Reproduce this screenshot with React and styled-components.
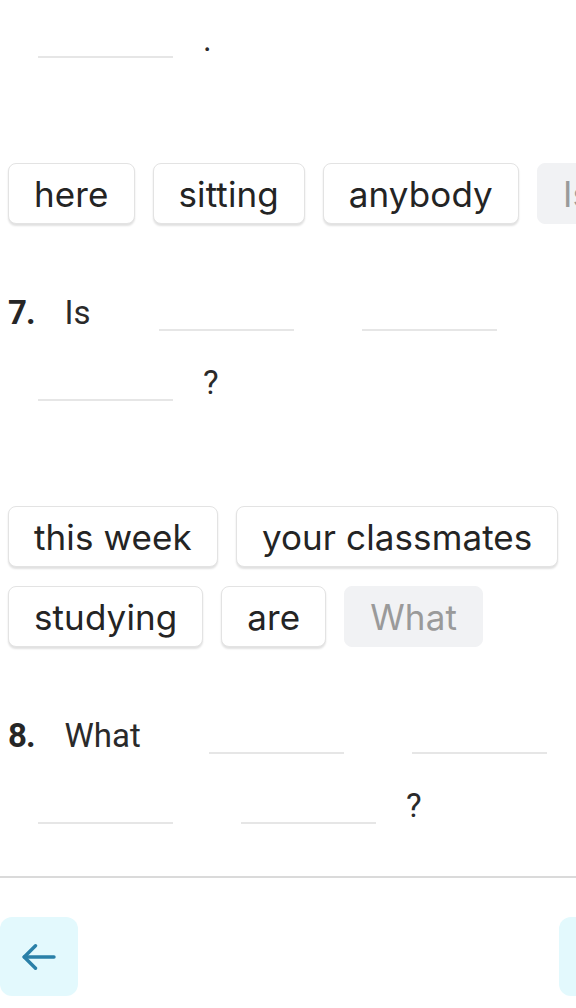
import React from "react";
import styled, { createGlobalStyle } from "styled-components";

const GlobalStyle = createGlobalStyle`
  html, body {
    margin: 0;
    padding: 0;
    background: #ffffff;
    overflow: hidden;
  }
  body {
    font-family: Roboto, "Liberation Sans", sans-serif;
    color: #2a2a2a;
  }
`;

const Page = styled.div`
  width: 637px;
  padding-top: 22px;
`;

const Content = styled.div`
  padding-left: 8px;
`;

const FillRow = styled.div`
  display: flex;
  flex-wrap: wrap;
  align-items: flex-end;
  column-gap: 8px;
  row-gap: 34px;
`;

const QNum = styled.span`
  font-family: Roboto, "Liberation Sans", sans-serif;
  font-weight: 700;
  font-size: 33px;
  line-height: 36px;
  height: 36px;
  padding-right: 22px;
  color: #262626;
  letter-spacing: -1px;
`;

const Word = styled.span`
  font-family: Roboto, "Liberation Sans", sans-serif;
  font-size: 33px;
  line-height: 36px;
  height: 36px;
  padding-right: 30px;
  color: #2a2a2a;
`;

const Punct = styled.span`
  font-family: Roboto, "Liberation Sans", sans-serif;
  font-size: 33px;
  line-height: 36px;
  height: 36px;
  margin-left: -8px;
  color: #2a2a2a;
`;

const Blank = styled.span`
  display: block;
  box-sizing: border-box;
  width: 135px;
  height: 36px;
  margin: 0 30px;
  border-bottom: 2px solid #e6e6e6;
`;

const ChipArea = styled.div`
  display: flex;
  flex-wrap: wrap;
  gap: 19px 18px;
  margin: 105px 0 71px;
`;

const Chip = styled.div`
  box-sizing: border-box;
  display: inline-flex;
  align-items: center;
  height: 61px;
  padding: 0 25px;
  border-radius: 8px;
  font-family: Inter, "Open Sans", sans-serif;
  font-size: 35px;
  letter-spacing: 0.1px;
  white-space: nowrap;
  color: ${(p) => (p.$used ? "#9a9a9a" : "#242424")};
  background: ${(p) => (p.$used ? "#f1f2f4" : "#ffffff")};
  border: 1px solid ${(p) => (p.$used ? "#f1f2f4" : "#e3e3e3")};
  box-shadow: ${(p) => (p.$used ? "none" : "0 2px 2px rgba(0, 0, 0, 0.12)")};
`;

const Divider = styled.div`
  height: 2px;
  background: #dadada;
  margin-top: 52px;
`;

const Footer = styled.div`
  display: flex;
  justify-content: space-between;
  margin-top: 39px;
`;

const NavButton = styled.button`
  width: 78px;
  height: 79px;
  border: none;
  border-radius: 12px;
  background: #e3f9fd;
  display: flex;
  align-items: center;
  justify-content: center;
  padding: 0;
  color: #2a80a8;
`;

const Arrow = ({ dir = "left" }) => (
  <svg
    width="34"
    height="26"
    viewBox="0 0 34 26"
    fill="none"
    stroke="currentColor"
    strokeWidth="3.4"
    strokeLinecap="round"
    strokeLinejoin="round"
    style={dir === "right" ? { transform: "scaleX(-1)" } : undefined}
  >
    <path d="M13.5 1.8 L2.2 13 L13.5 24.2" />
    <path d="M2.2 13 H32" />
  </svg>
);

const Question = ({ num, rows }) => (
  <FillRow>
    {num && <QNum>{num}</QNum>}
    {rows.map((t, i) =>
      t === "_" ? (
        <Blank key={i} />
      ) : t === "?" || t === "." ? (
        <Punct key={i}>{t}</Punct>
      ) : (
        <Word key={i}>{t}</Word>
      )
    )}
  </FillRow>
);

const Chips = ({ items }) => (
  <ChipArea>
    {items.map((c, i) => (
      <Chip key={i} $used={c.used}>
        {c.text}
      </Chip>
    ))}
  </ChipArea>
);

export default function App() {
  return (
    <Page>
      <GlobalStyle />
      <Content>
        <Question rows={["_", "."]} />
        <Chips
          items={[
            { text: "here" },
            { text: "sitting" },
            { text: "anybody" },
            { text: "Is", used: true },
          ]}
        />
        <Question num="7." rows={["Is", "_", "_", "_", "?"]} />
        <Chips
          items={[
            { text: "this week" },
            { text: "your classmates" },
            { text: "studying" },
            { text: "are" },
            { text: "What", used: true },
          ]}
        />
        <Question num="8." rows={["What", "_", "_", "_", "_", "?"]} />
      </Content>
      <Divider />
      <Footer>
        <NavButton aria-label="Previous">
          <Arrow dir="left" />
        </NavButton>
        <NavButton aria-label="Next">
          <Arrow dir="right" />
        </NavButton>
      </Footer>
    </Page>
  );
}
